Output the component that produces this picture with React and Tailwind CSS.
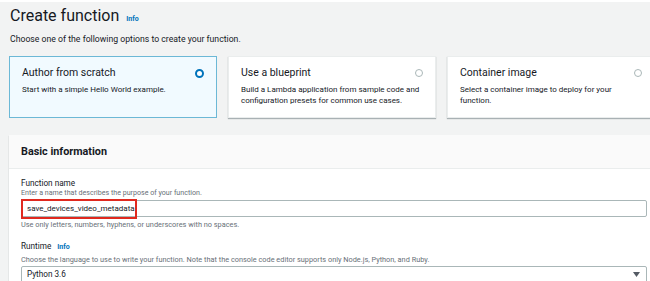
export default function App() {
  const cards = [
    {
      title: "Author from scratch",
      desc: "Start with a simple Hello World example.",
      selected: true,
    },
    {
      title: "Use a blueprint",
      desc: "Build a Lambda application from sample code and configuration presets for common use cases.",
    },
    {
      title: "Container image",
      desc: "Select a container image to deploy for your function.",
    },
  ];
  return (
    <div className="relative w-[650px] h-[281px] overflow-hidden bg-[#f2f3f3] font-['Roboto',sans-serif] text-[#16191f]">
      <div className="h-[2px] bg-white" />
      <div className="pl-[10px] pt-[4px] flex items-baseline gap-[7px]">
        <h1 className="text-[16px] leading-[20px]">Create function</h1>
        <span className="text-[7px] font-bold text-[#0073bb]">Info</span>
      </div>
      <p className="pl-[10px] mt-[7px] text-[8.7px] leading-[12px]">
        Choose one of the following options to create your function.
      </p>
      <div className="flex gap-[11px] ml-[9px] mt-[11px] w-[700px]">
        {cards.map((c) => (
          <div
            key={c.title}
            className={
              c.selected
                ? "w-[208px] shrink-0 h-[62px] border border-[#6cb8d6] bg-[#f1faff] pl-[12px] pr-[12px] pt-[9px]"
                : "w-[208px] shrink-0 h-[62px] border border-[#eaeded] bg-white shadow-[0_1px_1px_rgba(0,28,36,0.3)] pl-[12px] pr-[12px] pt-[9px]"
            }
          >
            <div className="flex items-center justify-between h-[14px]">
              <span className="text-[10.5px] leading-[14px]">{c.title}</span>
              {c.selected ? (
                <span className="w-[9px] h-[9px] rounded-full border-[2.5px] border-[#0073bb] bg-white" />
              ) : (
                <span className="w-[8px] h-[8px] rounded-full border border-[#aab7b8] bg-white" />
              )}
            </div>
            <p className="mt-[4px] text-[8px] leading-[11px]">{c.desc}</p>
          </div>
        ))}
      </div>
      <div className="ml-[9px] mt-[17px] w-[650px] bg-white shadow-[0_1px_1px_rgba(0,28,36,0.3)]">
        <div className="h-[34px] bg-[#fafafa] border-b border-[#eaeded] pl-[12px] pt-[10px]">
          <div className="text-[10.8px] leading-[14px] font-bold">Basic information</div>
        </div>
        <div className="pl-[12px] pr-[12px] pt-[9px]">
          <div className="text-[8.2px] leading-[10px]">Function name</div>
          <div className="text-[7.1px] leading-[9px] text-[#687078]">
            Enter a name that describes the purpose of your function.
          </div>
          <div className="mt-[3px] h-[17px] border border-[#aab7b8] rounded-[2px] pl-[5px] flex items-center">
            <span className="text-[8px] leading-[12px]">save_devices_video_metadata</span>
            <span className="w-px h-[9px] bg-[#16191f] ml-[1px]" />
          </div>
          <div className="mt-[3px] text-[7.35px] leading-[9px] text-[#687078]">
            Use only letters, numbers, hyphens, or underscores with no spaces.
          </div>
          <div className="mt-[12px] flex items-baseline gap-[6px]">
            <span className="text-[8.2px] leading-[10px]">Runtime</span>
            <span className="text-[7px] font-bold text-[#0073bb]">Info</span>
          </div>
          <div className="mt-[2px] text-[7.35px] leading-[9px] text-[#687078]">
            Choose the language to use to write your function. Note that the console code editor supports only Node.js, Python, and Ruby.
          </div>
          <div className="mt-[2px] h-[17px] border border-[#aab7b8] rounded-[2px] pl-[5px] pr-[6px] flex items-center justify-between">
            <span className="text-[8.2px] leading-[12px]">Python 3.6</span>
            <svg width="7" height="5" viewBox="0 0 7 5">
              <path d="M0 0h7L3.5 5z" fill="#545b64" />
            </svg>
          </div>
        </div>
      </div>
      <div className="absolute left-[21px] top-[199px] w-[116px] h-[20px] border-2 border-[#e0291f]" />
    </div>
  );
}
